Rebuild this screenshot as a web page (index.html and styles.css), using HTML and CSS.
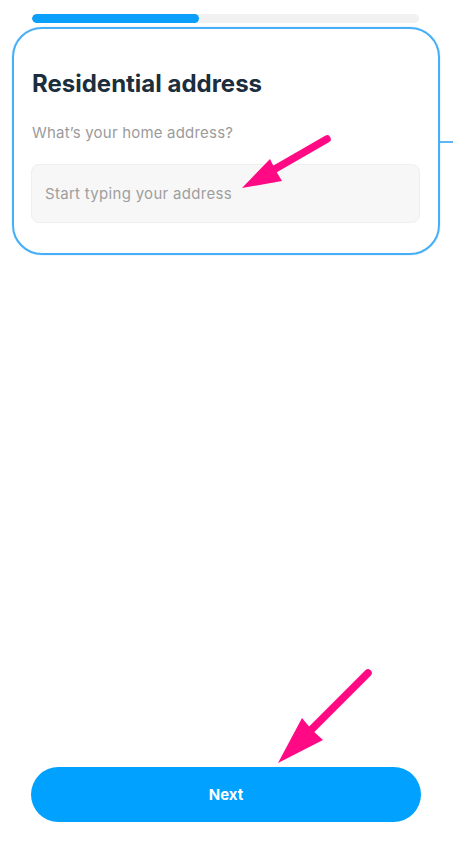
FILE: index.html
```html
<!DOCTYPE html>
<html lang="en">
<head>
<meta charset="utf-8">
<title>Residential address</title>
<link rel="stylesheet" href="styles.css">
</head>
<body>
<div class="screen">
  <div class="progress"><div class="progress-fill"></div></div>
  <section class="card">
    <h1 class="title">Residential address</h1>
    <p class="subtitle">What’s your home address?</p>
    <div class="input">Start typing your address</div>
    <span class="connector"></span>
  </section>
  <button class="next">Next</button>
  <svg class="annot" width="453" height="859" viewBox="0 0 453 859">
    <line x1="327" y1="139" x2="268" y2="173" stroke="#ff0a84" stroke-width="7.5" stroke-linecap="round"/>
    <polygon points="242,188 270,159 276,171 282,181" fill="#ff0a84"/>
    <line x1="368" y1="673" x2="308" y2="733" stroke="#ff0a84" stroke-width="7.5" stroke-linecap="round"/>
    <polygon points="278,763 302,718 312,730 323,740" fill="#ff0a84"/>
  </svg>
</div>
</body>
</html>
```

FILE: styles.css
```css
html, body {
  margin: 0;
  padding: 0;
  background: #ffffff;
}

body {
  font-family: Inter, "Noto Sans", "Liberation Sans", sans-serif;
}

.screen {
  position: relative;
  width: 453px;
  height: 859px;
  display: flex;
  flex-direction: column;
  overflow: hidden;
}

.progress {
  margin: 14px 0 0 32px;
  width: 387px;
  height: 9px;
  border-radius: 5px;
  background: #f1f1f1;
  overflow: hidden;
}

.progress-fill {
  width: 167px;
  height: 100%;
  border-radius: 5px;
  background: #0a9ffb;
}

.card {
  position: relative;
  margin: 4px 0 0 12px;
  padding: 40px 18px 30px 18px;
  box-sizing: border-box;
  width: 428px;
  border: 2px solid #45aef6;
  border-radius: 30px;
  box-shadow: 0 0 1.5px #a6d6fb;
}

.title {
  margin: 0;
  font-size: 24px;
  line-height: 30px;
  font-weight: 700;
  color: #1b2e3d;
}

.subtitle {
  margin: 24px 0 0 0;
  font-size: 15px;
  line-height: 20px;
  letter-spacing: 0.2px;
  color: #9b9b9b;
}

.input {
  margin: 21px 0 0 -1px;
  height: 59px;
  box-sizing: border-box;
  padding: 0 13px;
  display: flex;
  align-items: center;
  background: #f7f7f7;
  border: 1px solid #efefef;
  border-radius: 8px;
  font-size: 15px;
  letter-spacing: 0.3px;
  color: #9e9e9e;
}

.connector {
  position: absolute;
  left: 426px;
  top: 112px;
  width: 16px;
  height: 2px;
  background: #5cb7f4;
}

.next {
  margin: auto 0 37px 31px;
  width: 390px;
  height: 55px;
  border: none;
  border-radius: 28px;
  background: #00a1ff;
  color: #ffffff;
  font-family: Inter, "Noto Sans", "Liberation Sans", sans-serif;
  font-size: 15px;
  font-weight: 700;
}

.annot {
  position: absolute;
  left: 0;
  top: 0;
  pointer-events: none;
}
```
